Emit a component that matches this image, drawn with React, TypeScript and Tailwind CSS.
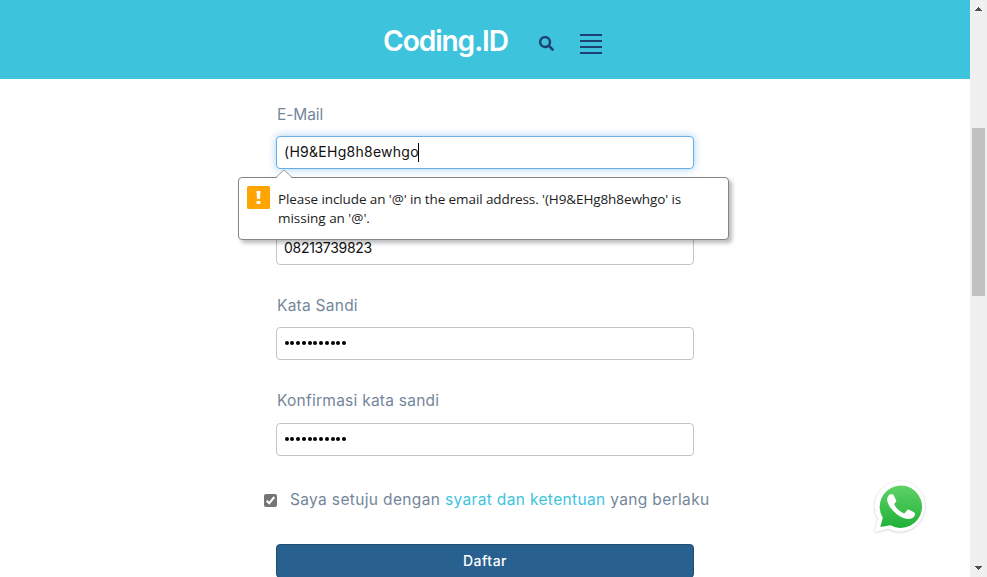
import React from "react";

const label = "h-6 pl-px text-[15.5px] leading-6 text-[#74869a] whitespace-nowrap tracking-[0.25px]";
const box =
  "mt-[9px] flex h-[33px] items-center rounded-[4px] border border-[#c4c4c4] bg-white px-[7px] pb-px text-sm text-[#111] whitespace-nowrap";

function Dots() {
  return (
    <div className="flex gap-[1.75px] pl-[0.5px]">
      {Array.from({ length: 11 }, (_, i) => (
        <span key={i} className="size-1 rounded-full bg-black" />
      ))}
    </div>
  );
}

function Header() {
  return (
    <header className="flex h-[79px] items-start bg-[#3ec3dd] pl-[378px]">
      <svg className="mt-[12px] h-[60px] w-[138px] overflow-visible" viewBox="0 0 138 60">
        <text x="5" y="39" fill="#fff" fontSize="29" fontWeight="600" fontFamily="Inter, sans-serif" letterSpacing="-1.1" textLength="125" lengthAdjust="spacingAndGlyphs">
          Coding.ID
        </text>
      </svg>
      <svg className="mt-9 ml-[23px] size-[15px]" viewBox="0 0 512 512" fill="#1b4171">
        <path d="M505 442.7 405.300 343c-4.500-4.500-10.600-7-17-7H372c27.600-35.300 44-79.700 44-128C416 93.100 322.900 0 208 0S0 93.100 0 208s93.100 208 208 208c48.300 0 92.700-16.400 128-44v16.300c0 6.400 2.500 12.500 7 17l99.700 99.700c9.400 9.400 24.600 9.400 33.900 0l28.300-28.300c9.400-9.400 9.400-24.600.1-34zM208 336c-70.700 0-128-57.200-128-128 0-70.700 57.200-128 128-128 70.700 0 128 57.200 128 128 0 70.700-57.200 128-128 128z" />
      </svg>
      <div className="mt-[34px] ml-[26px] flex w-[22px] flex-col gap-1">
        <span className="h-0.5 bg-[#1b4171]" />
        <span className="h-0.5 bg-[#1b4171]" />
        <span className="h-0.5 bg-[#1b4171]" />
        <span className="h-0.5 bg-[#1b4171]" />
      </div>
    </header>
  );
}

function Tooltip() {
  return (
    <div className="absolute top-[41px] -left-[38px] flex h-[63px] w-[491px] rounded-[4px] border border-[#858585] bg-white pt-2 pl-2 shadow-[3px_3px_4px_rgba(0,0,0,0.28)]">
      <svg className="absolute -top-[9px] left-[36px] h-[10px] w-[18px]" viewBox="0 0 18 10">
        <path d="M0.500 10 9 1.200 17.500 10Z" fill="#fff" />
        <path d="M0.500 8.800 9 0.900 17.500 8.800" fill="none" stroke="#9a9a9a" />
      </svg>
      <svg className="size-[23px] shrink-0" viewBox="0 0 23 23">
        <rect width="23" height="23" rx="1.500" fill="#ffa400" />
        <path d="M9.500 5h4l-.5 8h-3zM9.600 15h3.800v3H9.600z" fill="#fff" />
      </svg>
      <div className="ml-2 pt-1 font-['Open_Sans',sans-serif] text-[13.500px] leading-[19px] whitespace-nowrap text-[#1c1c1c]">
        <div><span className="tracking-[-0.1px]">Please include an '@' in the email address. '(H9&amp;EHg8h8ewhgo' is</span></div>
        <div><span className="tracking-[-0.02px]">missing an '@'.</span></div>
      </div>
    </div>
  );
}

function WhatsApp() {
  return (
    <svg className="absolute top-[476px] left-[869.5px] size-[60px]" viewBox="0 0 60 60">
      <defs>
        <linearGradient id="wa" x1="0" y1="0" x2="0" y2="1">
          <stop offset="0" stopColor="#5fd366" />
          <stop offset="1" stopColor="#20b038" />
        </linearGradient>
        <filter id="shade" x="-20%" y="-20%" width="140%" height="140%">
          <feDropShadow dx="0" dy="0.500" stdDeviation="1" floodColor="#000" floodOpacity="0.28" />
        </filter>
      </defs>
      <path d="M4.800 56 8.300 43.200A25 25 0 1 1 18.300 52.600Z" fill="#fff" filter="url(#shade)" />
      <path d="M10.300 51 12.800 41.800A21.200 21.200 0 1 1 20.500 49.200Z" fill="url(#wa)" />
      <path d="M23.800 19.400c-.5-1.200-1-1.200-1.600-1.200h-1.300c-.6 0-1.200.2-1.800.8-2.200 2.200-2.500 5-1.100 8.300 2.500 5.700 8.300 11.900 15.500 14.700 5.300 2.100 8.700 1 10.800-1.700.8-1.100.9-2.900.5-3.400-.4-.5-4.800-2.800-6-3.200-.8-.3-1.300-.1-1.800.5l-2 2.500c-.5.6-1 .7-1.800.3-3.800-1.800-6.700-4.500-8.700-8-.4-.7-.1-1.100.4-1.700 1.600-1.900 1.600-2.200 1.100-3.300z" fill="#fff" />
    </svg>
  );
}

function Scrollbar() {
  return (
    <div className="flex h-full w-[17px] flex-col items-center justify-between bg-[#f0f0f0] py-[7px]">
      <svg className="h-1 w-[7px]" viewBox="0 0 7 4" shapeRendering="crispEdges"><path d="M3 0h1v1h1v1h1v1h1v1H0V3h1V2h1V1h1z" fill="#505050" /></svg>
      <span className="absolute top-32 h-[168px] w-[13px] bg-[#c1c1c1]" />
      <svg className="h-1 w-[7px]" viewBox="0 0 7 4" shapeRendering="crispEdges"><path d="M0 0h7v1H6v1H5v1H4v1H3V3H2V2H1V1H0z" fill="#505050" /></svg>
    </div>
  );
}

export default function App() {
  return (
    <div className="relative flex h-[577px] w-[987px] overflow-hidden bg-white font-['Inter','Liberation_Sans',sans-serif]">
      <div className="w-[970px]">
        <Header />
        <main className="ml-[276px] w-[418px] pt-6">
          <div className="h-24">
            <div className={label}><span className="tracking-[-0.1px]">E-Mail</span></div>
            <div className="relative z-10">
              <div className="mt-[9px] flex h-[33px] items-center rounded-[4px] border border-[#66afe9] bg-white px-[7px] pb-px text-sm whitespace-nowrap text-[#111] shadow-[0_0_8px_rgba(102,175,233,0.6)]">
                <span className="tracking-[0.27px]">(H9&amp;EHg8h8ewhgo</span>
                <span className="-ml-px h-[19px] w-px bg-black" />
              </div>
              <Tooltip />
            </div>
          </div>
          <div className="h-[95px]">
            <div className={label} />
            <div className={box}><span className="tracking-[-0.3px]">08213739823</span></div>
          </div>
          <div className="h-[95px]">
            <div className={label}><span>Kata Sandi</span></div>
            <div className={box}><Dots /></div>
          </div>
          <div className="h-[99px]">
            <div className={label}><span>Konfirmasi kata sandi</span></div>
            <div className="mt-[10px] flex h-[33px] items-center rounded-[4px] border border-[#c4c4c4] bg-white px-[7px] pb-px"><Dots /></div>
          </div>
          <div className="-ml-3 flex h-6 items-center text-[15.5px] whitespace-nowrap text-[#74869a]">
            <svg className="size-[13px] shrink-0" viewBox="0 0 13 13">
              <rect width="13" height="13" rx="2" fill="#757575" />
              <path d="M2.700 6.800 5.200 9.300 10.300 3" fill="none" stroke="#fff" strokeWidth="2" />
            </svg>
            <span className="ml-[13px] tracking-[0.35px]">Saya setuju dengan <span className="text-[#3ec3dd]">syarat dan ketentuan</span> yang berlaku</span>
          </div>
          <div className="mt-8 flex h-[34px] items-center justify-center rounded-[4px] border border-[#204d74] bg-[#286090] text-sm font-medium text-white">
            <span className="tracking-[0.5px]">Daftar</span>
          </div>
        </main>
      </div>
      <Scrollbar />
      <WhatsApp />
    </div>
  );
}
